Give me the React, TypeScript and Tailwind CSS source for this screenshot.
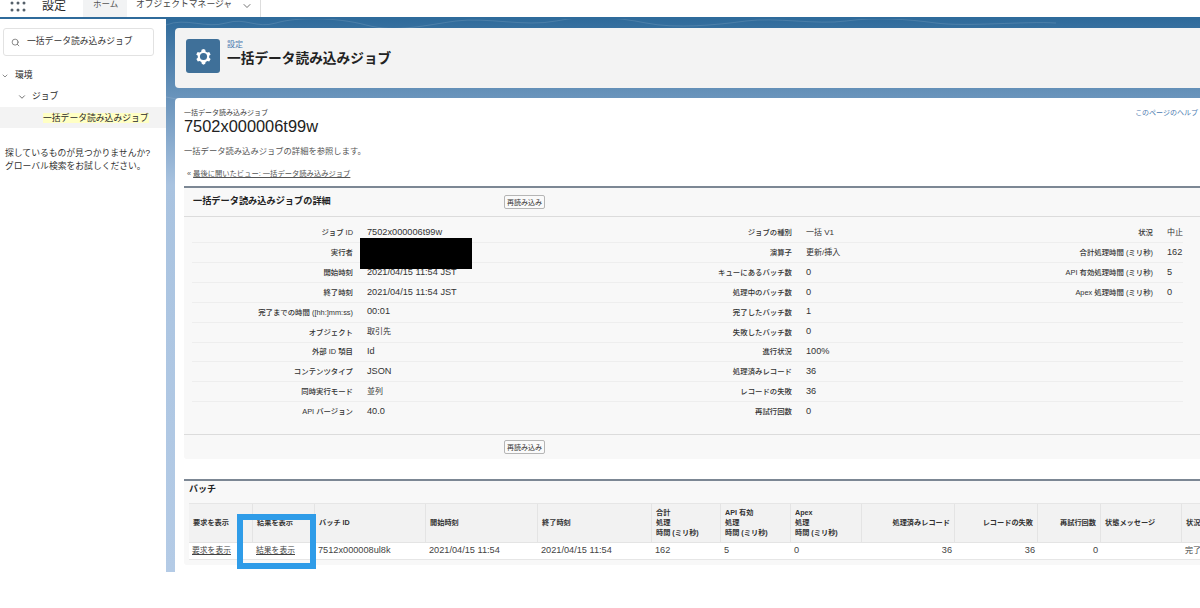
import { ChevronDown, Search } from "lucide-react";

const font = "font-['Liberation_Sans','Noto_Sans_CJK_JP',sans-serif]";

const rows = [
  ["ジョブ ID", "7502x000006t99w", "ジョブの種別", "一括 V1", "状況", "中止"],
  ["実行者", "", "演算子", "更新/挿入", "合計処理時間 (ミリ秒)", "162"],
  ["開始時刻", "2021/04/15 11:54 JST", "キューにあるバッチ数", "0", "API 有効処理時間 (ミリ秒)", "5"],
  ["終了時刻", "2021/04/15 11:54 JST", "処理中のバッチ数", "0", "Apex 処理時間 (ミリ秒)", "0"],
  ["完了までの時間 ([hh:]mm:ss)", "00:01", "完了したバッチ数", "1", "", ""],
  ["オブジェクト", "取引先", "失敗したバッチ数", "0", "", ""],
  ["外部 ID 項目", "Id", "進行状況", "100%", "", ""],
  ["コンテンツタイプ", "JSON", "処理済みレコード", "36", "", ""],
  ["同時実行モード", "並列", "レコードの失敗", "36", "", ""],
  ["API バージョン", "40.0", "再試行回数", "0", "", ""],
];

const batchHead = [
  { label: ["要求を表示"] },
  { label: ["結果を表示"] },
  { label: ["バッチ ID"] },
  { label: ["開始時刻"] },
  { label: ["終了時刻"] },
  { label: ["合計", "処理", "時間 (ミリ秒)"] },
  { label: ["API 有効", "処理", "時間 (ミリ秒)"] },
  { label: ["Apex", "処理", "時間 (ミリ秒)"] },
  { label: ["処理済みレコード"], right: true },
  { label: ["レコードの失敗"], right: true },
  { label: ["再試行回数"], right: true },
  { label: ["状態メッセージ"] },
  { label: ["状況"] },
];

const batchRow = [
  { text: "要求を表示", link: true },
  { text: "結果を表示", link: true },
  { text: "7512x000008ul8k" },
  { text: "2021/04/15 11:54" },
  { text: "2021/04/15 11:54" },
  { text: "162" },
  { text: "5" },
  { text: "0" },
  { text: "36", right: true },
  { text: "36", right: true },
  { text: "0", right: true },
  { text: "" },
  { text: "完了" },
];

// japanese values sit smaller in the picture than the latin ones
function valueSize(v: string) {
  return /[^\x00-\x7f]/.test(v) ? "text-[8px]" : "text-[9.2px]";
}

function ReloadButton() {
  return (
    <button className="h-[14px] w-[41px] rounded-[2px] border border-[#b5b5b5] bg-[#fafafa] text-[7px] leading-none text-[#333]">
      再読み込み
    </button>
  );
}

function Gear() {
  return (
    <svg viewBox="0 0 24 24" className="h-[19px] w-[19px]" fill="none">
      <path
        d="M12 2.5l2.2 1.1.5 2.3 2.2 1.2 2.3-.7 1.8 3.2-1.8 1.6v2.4l1.8 1.6-1.8 3.2-2.3-.7-2.2 1.2-.5 2.3-2.2 1.1-2.2-1.1-.5-2.3-2.2-1.2-2.3.7-1.8-3.2 1.8-1.6v-2.4L2.8 9.6l1.8-3.2 2.3.7 2.2-1.2.5-2.3z"
        fill="white"
      />
      <circle cx="12" cy="12" r="4.5" fill="#3f7099" />
    </svg>
  );
}

export default function App() {
  return (
    <div className={`relative flex h-[608px] w-[1200px] flex-col overflow-hidden bg-white text-[#2a2a2a] ${font}`}>
      {/* top nav, cut off by the top of the video frame */}
      <div className="flex h-[17px] shrink-0 items-start overflow-hidden bg-white">
        <svg viewBox="0 0 16 13" className="ml-[10px] h-[13px] w-[16px]" fill="#55606a">
          <circle cx="2" cy="3" r="1.5" />
          <circle cx="8" cy="3" r="1.5" />
          <circle cx="14" cy="3" r="1.5" />
          <circle cx="2" cy="10" r="1.5" />
          <circle cx="8" cy="10" r="1.5" />
          <circle cx="14" cy="10" r="1.5" />
        </svg>
        <span className="ml-[16px] text-[12px] leading-[12px]">設定</span>
        <div className="ml-[17px] h-full w-[44px] bg-[#f2f3f4] pl-[10px] text-[8.5px] leading-[9px] text-[#555]">ホーム</div>
        <div className="flex h-full w-[134px] items-start border-r border-[#ddd] pl-[9px] text-[8.8px] leading-[9px] text-[#444]">
          <span className="w-[105px] whitespace-nowrap">オブジェクトマネージャ</span>
          <ChevronDown className="h-[12px] w-[12px]" strokeWidth={1.5} />
        </div>
      </div>

      <div className="flex h-[555px] shrink-0">
        {/* setup tree */}
        <aside className="flex w-[166px] shrink-0 flex-col border-t-2 border-[#2f6b9b] bg-white">
          <div className="mx-[3px] mt-[9px] flex h-[28px] w-[151px] items-center rounded-[3px] border border-[#e2e2e2] pl-[7px]">
            <Search className="h-[9px] w-[9px] text-[#666]" strokeWidth={2} />
            <span className="ml-[7px] text-[8.8px] whitespace-nowrap text-[#333]">一括データ読み込みジョブ</span>
          </div>
          <div className="mt-[9px] flex h-[21px] items-center pl-[1px] text-[8.8px]">
            <ChevronDown className="h-[8px] w-[8px] text-[#555]" />
            <span className="ml-[6px]">環境</span>
          </div>
          <div className="flex h-[21px] items-center pl-[17px] text-[8.8px]">
            <ChevronDown className="h-[10px] w-[10px] text-[#555]" />
            <span className="ml-[5px]">ジョブ</span>
          </div>
          <div className="flex h-[21px] items-center bg-[#f3f3f3] pl-[43px] text-[8.8px]">
            <span className="whitespace-nowrap bg-[#ffffc4] leading-[10px]">一括データ読み込みジョブ</span>
          </div>
          <p className="mt-[19px] ml-[5px] text-[8.8px] leading-[13px] text-[#333]">
            探しているものが見つかりませんか?
            <br />
            グローバル検索をお試しください。
          </p>
        </aside>

        {/* blue work area */}
        <main className="relative flex min-w-0 flex-1 flex-col border-t-2 border-[#2f6b9b] bg-gradient-to-b from-[#2f6b9b] from-0% via-[#a9c3e0] via-30% to-[#b4cbe6] pt-[9px] pl-[9px]">
          <svg viewBox="0 0 1034 90" className="absolute top-0 left-0 h-[90px] w-[1034px]" fill="none" stroke="#ffffff" strokeOpacity="0.18" strokeWidth="0.7">
            <path d="M0 6c20-8 40 4 60-2s30 6 50 0 60-6 90 2 60 0 90-4 70 6 100 0 60-4 90 2 70 2 100-2 70 4 100 0 60-2 90 2 90-2 120 0" />
            <path d="M0 78c30 6 50 8 80 4s50 6 90 2 80-4 120 2 60 4 100-2 90 6 130 2 70-6 110 0 90 2 130-2 70 2 184 0" />
          </svg>
          <div className="relative flex h-[60px] shrink-0 items-start rounded-l-[4px] bg-[#f3f3f3] pl-[11px]">
            <div className="mt-[11px] flex h-[34px] w-[34px] items-center justify-center rounded-[3px] bg-[#3f7099]">
              <Gear />
            </div>
            <div className="mt-[12px] ml-[7px]">
              <div className="text-[8px] leading-[10px] text-[#4c7bb0]">設定</div>
              <div className="text-[13.7px] leading-[18px] font-bold whitespace-nowrap text-[#222]">一括データ読み込みジョブ</div>
            </div>
          </div>

          <div className="relative mt-[10px] flex min-h-0 flex-1 flex-col overflow-hidden rounded-tl-[4px] bg-white pl-[9px]">
            <div className="flex items-start justify-between pt-[10px] pr-[2px]">
              <div className="text-[7px] leading-[9px] text-[#444]">一括データ読み込みジョブ</div>
              <div className="text-[7px] leading-[9px] whitespace-nowrap text-[#4c7bb0]">このページのヘルプ</div>
            </div>
            <div className="mt-[1px] text-[16.4px] leading-[16px] text-[#222]">7502x000006t99w</div>
            <div className="mt-[11px] text-[8.3px] leading-[12px] text-[#555]">一括データ読み込みジョブの詳細を参照します。</div>
            <div className="mt-[12px] pl-[3px] text-[7.3px] leading-[10px] text-[#555]">
              « <span className="underline">最後に開いたビュー: 一括データ読み込みジョブ</span>
            </div>

            {/* job detail panel */}
            <section className="mt-[7px] flex h-[273px] w-[1040px] shrink-0 flex-col rounded-b-[3px] border-t-2 border-[#7c8794] bg-[#f8f8f8]">
              <div className="flex h-[29px] shrink-0 items-center border-b border-[#dcdcdc] pl-[9px]">
                <span className="w-[311px] text-[9.2px] font-bold text-[#222]">一括データ読み込みジョブの詳細</span>
                <ReloadButton />
              </div>
              <div className="flex-1 pt-[6.5px] pl-[8px]">
                {rows.map((r, i) => (
                  <div
                    key={i}
                    className="grid h-[19.85px] w-[991px] grid-cols-[161px_14px_224px_201px_14px_100px_247px_14px_16px] items-center border-b border-[#eeeeee] last:border-b-0"
                  >
                    <span className="text-right text-[7.4px] font-medium whitespace-nowrap text-[#333]">{r[0]}</span>
                    <span />
                    <span className={`whitespace-nowrap text-[#333] ${valueSize(r[1])}`}>{r[1]}</span>
                    <span className="text-right text-[7.4px] font-medium whitespace-nowrap text-[#333]">{r[2]}</span>
                    <span />
                    <span className={`whitespace-nowrap text-[#333] ${valueSize(r[3])}`}>{r[3]}</span>
                    <span className="text-right text-[7.4px] font-medium whitespace-nowrap text-[#333]">{r[4]}</span>
                    <span />
                    <span className={`whitespace-nowrap text-[#333] ${valueSize(r[5])}`}>{r[5]}</span>
                  </div>
                ))}
              </div>
              <div className="flex h-[25px] shrink-0 items-center border-t border-[#dcdcdc] pl-[320px]">
                <ReloadButton />
              </div>
            </section>

            {/* batch panel */}
            <section className="mt-[20px] flex h-[86px] w-[1040px] shrink-0 flex-col rounded-b-[3px] border-t-2 border-[#7c8794] bg-[#f8f8f8] pl-[5px]">
              <div className="flex h-[22px] shrink-0 items-start text-[9px] leading-[16px] font-bold text-[#222]">バッチ</div>
              <div className="grid w-[1040px] grid-cols-[64px_62px_111px_112px_114px_69px_70px_71px_93px_83px_63px_81px_60px] border-y border-[#e6e6e6]">
                {batchHead.map((h, i) => (
                  <div
                    key={i}
                    className={`flex h-[38px] flex-col justify-center border-r border-[#e4e4e4] bg-[#f2f2f2] px-[4px] text-[7.2px] leading-[10px] font-bold whitespace-nowrap text-[#333] ${h.right ? "items-end" : "items-start"}`}
                  >
                    {h.label.map((l) => (
                      <span key={l}>{l}</span>
                    ))}
                  </div>
                ))}
                {batchRow.map((c, i) => (
                  <div
                    key={i}
                    className={`flex h-[17px] items-center border-t border-[#e4e4e4] bg-white px-[3px] whitespace-nowrap text-[#444] ${c.link ? "text-[7.8px] underline" : valueSize(c.text)} ${c.right ? "justify-end" : ""}`}
                  >
                    {c.text}
                  </div>
                ))}
              </div>
            </section>
          </div>
        </main>
      </div>

      {/* redaction over the 実行者 value */}
      <div className="absolute top-[238px] left-[360px] h-[31px] w-[112px] bg-black" />
      {/* callout box around the results link */}
      <div className="absolute top-[514px] left-[237px] h-[55px] w-[79px] border-[6px] border-[#2f9ce8]" />
    </div>
  );
}
